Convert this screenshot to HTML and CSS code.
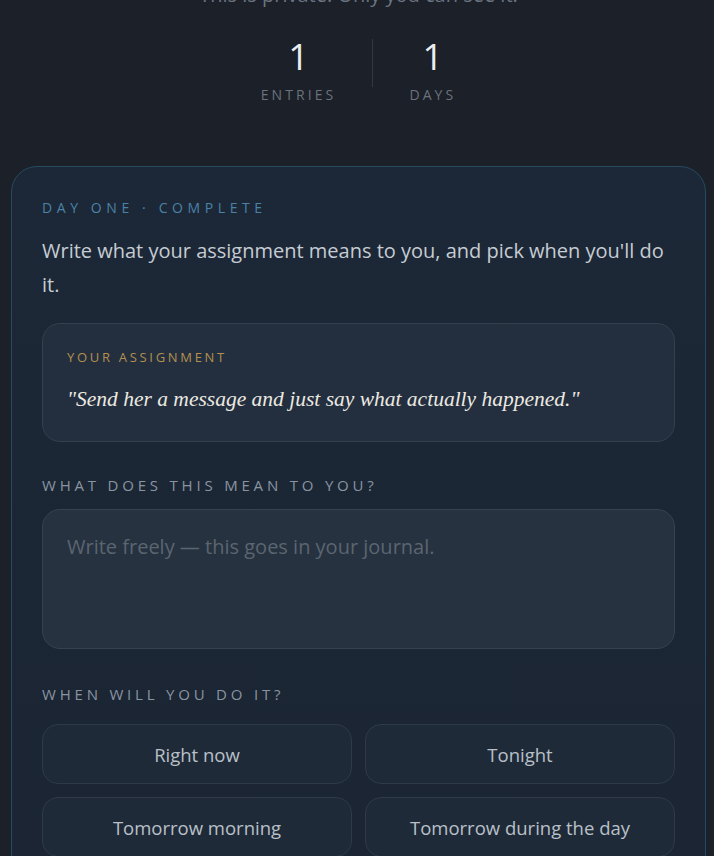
FILE: index.html
```html
<html>
<head>
  <link rel="stylesheet" href="styles.css">
</head>
<body>
  <div class="page">
    <p class="intro">This is private. Only you can see it.</p>

    <div class="stats">
      <div class="stat">
        <div class="stat-num">1</div>
        <div class="stat-label">Entries</div>
      </div>
      <div class="stat-divider"></div>
      <div class="stat">
        <div class="stat-num">1</div>
        <div class="stat-label">Days</div>
      </div>
    </div>

    <div class="card">
      <div class="eyebrow">Day One · Complete</div>
      <p class="lead">Write what your assignment means to you, and pick when you'll do it.</p>

      <div class="assignment">
        <div class="assignment-label">Your assignment</div>
        <p class="assignment-text">"Send her a message and just say what actually happened."</p>
      </div>

      <div class="field-label">What does this mean to you?</div>
      <textarea class="journal" placeholder="Write freely — this goes in your journal."></textarea>

      <div class="field-label">When will you do it?</div>
      <div class="options">
        <button class="option">Right now</button>
        <button class="option">Tonight</button>
        <button class="option">Tomorrow morning</button>
        <button class="option">Tomorrow during the day</button>
      </div>
    </div>
  </div>
</body>
</html>
```

FILE: styles.css
```css
body {
  margin: 0;
  background: #1b2029;
  font-family: "Open Sans", Lato, sans-serif;
  color: #c9ced5;
}

.page {
  padding: 0 8px 40px 11px;
}

.intro {
  margin: -19px 0 0;
  text-align: center;
  font-size: 20px;
  color: #6b7480;
}

.stats {
  display: flex;
  justify-content: center;
  margin-top: 29px;
}

.stat {
  padding: 0 36px;
  text-align: center;
}

.stat-num {
  font-size: 36px;
  font-weight: 400;
  line-height: 40px;
  color: #eaeef1;
}

.stat-label {
  margin-top: 8px;
  font-size: 14px;
  letter-spacing: 3.1px;
  text-transform: uppercase;
  color: #6c727b;
}

.stat-divider {
  width: 1px;
  margin-top: 2px;
  height: 48px;
  background: #2f3845;
}

.card {
  margin-top: 62px;
  padding: 30px 30px 40px;
  border: 1px solid #264a60;
  border-radius: 26px;
  background: linear-gradient(180deg, #1c2837 0%, #1b2533 100%);
}

.eyebrow {
  margin-top: 1px;
  font-size: 14px;
  letter-spacing: 4.6px;
  text-transform: uppercase;
  color: #4a82a6;
}

.lead {
  margin: 17px 0 0;
  font-size: 20px;
  line-height: 34px;
  color: #c6ccd3;
}

.assignment {
  margin-top: 21px;
  padding: 24px 24px 29px;
  border: 1px solid #34404e;
  border-radius: 18px;
  background: #232f3e;
}

.assignment-label {
  font-size: 13px;
  letter-spacing: 2.7px;
  text-transform: uppercase;
  color: #b39050;
}

.assignment-text {
  margin: 21px 0 0;
  font-family: "Liberation Serif", serif;
  font-style: italic;
  font-size: 21.5px;
  color: #ece9e2;
}

.field-label {
  margin-top: 33px;
  font-size: 15px;
  letter-spacing: 3.8px;
  text-transform: uppercase;
  color: #8a94a1;
}

.journal + .field-label {
  margin-top: 35px;
}

.journal {
  display: block;
  box-sizing: border-box;
  width: 100%;
  height: 140px;
  margin-top: 14px;
  padding: 23px 24px;
  border: 1px solid #36424f;
  border-radius: 18px;
  background: #263240;
  font-family: inherit;
  font-size: 20px;
  color: #c9ced5;
  resize: none;
}

.journal::placeholder {
  color: #5b6570;
}

.options {
  display: grid;
  grid-template-columns: 1fr 1fr;
  gap: 13px;
  margin-top: 20px;
}

.option {
  height: 60px;
  border: 1px solid #2e3a48;
  border-radius: 16px;
  background: #1f2a38;
  font-family: inherit;
  font-size: 18.5px;
  color: #b9c0c8;
}
```
